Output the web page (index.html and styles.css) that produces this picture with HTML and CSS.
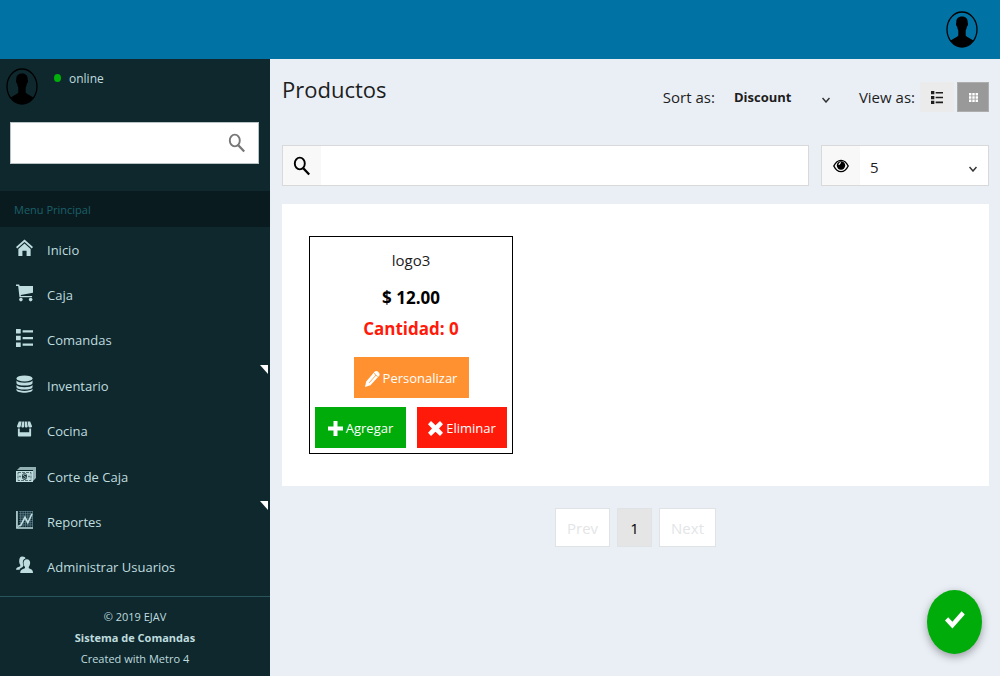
FILE: index.html
```html
<!DOCTYPE html>
<html lang="es">
<head>
<meta charset="utf-8">
<meta name="viewport" content="width=device-width, initial-scale=1">
<title>Productos</title>
<link rel="stylesheet" href="styles.css">
</head>
<body>
<svg class="defs" aria-hidden="true">
  <symbol id="avatar" viewBox="0 0 32 37" preserveAspectRatio="none">
    <ellipse cx="16" cy="18.500" rx="15" ry="17.500" fill="none" stroke="#000" stroke-width="1.300"/>
    <path d="M16 5.500c-4 0-6 2.400-5.700 6.200-.7.600-.2 3.500.8 3.900.2 1.800.8 3 1.200 4v5c-1.200 2-4.400 2.600-7.600 4.800C7.500 33.500 11.800 36 16 36s8.500-2.500 11.300-6.600c-3.200-2.200-6.400-2.800-7.600-4.800v-5c.4-1 1-2.200 1.200-4 1-.4 1.500-3.300.8-3.900C22 7.900 20 5.500 16 5.500z"/>
  </symbol>
  <symbol id="search" viewBox="0 0 18 20">
    <ellipse cx="6.800" cy="7.500" rx="5" ry="5.900" fill="none" stroke="currentColor" stroke-width="1.900"/>
    <path d="M10.300 12.200l5.900 6.300" fill="none" stroke="currentColor" stroke-width="2.300"/>
  </symbol>
  <symbol id="list" viewBox="0 0 18 20" preserveAspectRatio="none">
    <path d="M0 0h5v5H0zM0 7.500h5v5H0zM0 15h5v5H0zM7 1.500h11v2.500H7zM7 8.800h11v2.500H7zM7 16.200h11v2.500H7z"/>
  </symbol>
</svg>

<header class="topbar">
  <button class="avatar-btn" aria-label="Perfil"><svg class="avatar"><use href="#avatar"/></svg></button>
</header>

<div class="shell">
  <aside class="sidebar">
    <div class="user">
      <svg class="avatar"><use href="#avatar"/></svg>
      <a class="status" href="#"><span class="dot"></span>online</a>
    </div>
    <form class="side-search">
      <input type="text" aria-label="Buscar en el menú">
      <button type="button" aria-label="Buscar"><svg class="icon-search"><use href="#search"/></svg></button>
    </form>
    <h2 class="menu-title">Menu Principal</h2>
    <nav class="menu">
      <a href="#"><svg viewBox="0 0 18 18"><path d="M9 0l9 8-1.300 1.500L9 2.700 1.300 9.500 0 8z"/><path d="M2.500 10L9 4.200l6.500 5.800v7.500h-4.300V12H6.800v5.500H2.500z"/></svg>Inicio</a>
      <a href="#"><svg viewBox="0 0 18 18"><path d="M0 0h3.400l.5 1.500H18v7.300L5 11l.2 1.200H17v1.300H3.700L2.300 1.500H0z"/><circle cx="5.200" cy="16" r="1.900"/><circle cx="15.500" cy="16" r="1.900"/></svg>Caja</a>
      <a href="#"><svg><use href="#list"/></svg>Comandas</a>
      <a href="#" class="has-sub"><svg viewBox="0 0 18 20" preserveAspectRatio="none"><ellipse cx="9" cy="3.800" rx="8.500" ry="3.300"/><path d="M.5 6.200c2 3.300 15 3.300 17 0v2.600c-.5 4-16.500 4-17 0zM.5 11c2 3.300 15 3.300 17 0v2.200c-.5 4-16.500 4-17 0zM.5 15.400c2 3.200 15 3.200 17 0v1.300c-.5 4-16.500 4-17 0z"/></svg>Inventario</a>
      <a href="#"><svg viewBox="0 0 18 18"><path d="M3 1h3L5 6c0 2-4 2-4 0zM6.700 1h2v5c0 2-3.200 2-3 0zM9.400 1h2l1 5c0 2-3 2-3 0zM12.200 1H15l2 5c0 2-4 2-4 0zM2 8.500h2v4h10v-4h2V16c0 .7-.3 1-1 1H3c-.7 0-1-.3-1-1z"/></svg>Cocina</a>
      <a href="#"><svg class="wide" viewBox="0 0 20 16"><path d="M3 1l1-1h16v11l-3 3V3H1z" opacity=".75"/><path d="M0 4h17v11H0z"/><path d="M2 5.500h13v8H2z" fill="none" stroke="#10282e" stroke-width=".6" stroke-dasharray="3 1"/><ellipse cx="8.500" cy="9.500" rx="2.400" ry="3.300" fill="#10282e"/><path d="M10 7.800c-1-1-2.700-.7-2.700.4 0 1.400 2.500.9 2.500 2.200 0 1.200-1.900 1.300-2.800.4" fill="none" stroke="#bfdcdf" stroke-width=".8"/><path d="M3.500 8.800h1v1.500h-1zM12.500 8.800h1v1.500h-1z" fill="#10282e"/></svg>Corte de Caja</a>
      <a href="#" class="has-sub"><svg viewBox="0 0 18 20" preserveAspectRatio="none"><path d="M3 .5h15M3 3h15M3 5.500h15M3 8h15M3 10.500h15M3 13h15M3 15.500h15M5 0v18M7.500 0v18M10 0v18M12.500 0v18M15 0v18M17.500 0v18" stroke="#668f9c" stroke-width=".7"/><path d="M1 0v19h17" fill="none" stroke="#bfdcdf" stroke-width="1.700"/><path d="M2 17l3-1 4.500-9 3 6L17 3" fill="none" stroke="#bfdcdf" stroke-width="1.700"/></svg>Reportes</a>
      <a href="#"><svg viewBox="0 0 18 18"><path d="M6.500 0C9 0 10 1 10 2 7 3 6.700 6 8 9.500L7 11l-3 2v1H0c0-2.500 2-2.800 4.500-3.800V8.700C3 7.500 2.500 0 6.500 0z"/><path d="M11.500 3c4.500 0 4 6 2 8v1.500c2.500 1 4.500 1.500 4.500 5H4.500c0-3.500 2.300-4 5-5V11c-2-2-2.500-8 2-8z"/></svg>Administrar Usuarios</a>
    </nav>
    <footer class="side-foot">
      <p>© 2019 EJAV</p>
      <p><b>Sistema de Comandas</b></p>
      <p>Created with Metro 4</p>
    </footer>
  </aside>

  <main class="content">
    <div class="heading">
      <h1>Productos</h1>
      <div class="tools">
        <label for="sort">Sort as:</label>
        <span class="select sort"><select id="sort"><option>Discount</option></select><svg class="chev" viewBox="0 0 8 6"><path d="M.5 1L4 5l3.500-4"/></svg></span>
        <span class="view-label">View as:</span>
        <button class="view" aria-label="Lista"><svg class="view-list"><use href="#list"/></svg></button>
        <button class="view active" aria-label="Cuadrícula"><svg class="view-grid" viewBox="0 0 9 9"><path d="M0 0h2.400v2.400H0zM3.300 0h2.400v2.400H3.300zM6.600 0H9v2.400H6.600zM0 3.300h2.400v2.400H0zM3.300 3.300h2.400v2.400H3.300zM6.600 3.300H9v2.400H6.600zM0 6.600h2.400V9H0zM3.300 6.600h2.400V9H3.300zM6.600 6.600H9V9H6.600z"/></svg></button>
      </div>
    </div>

    <div class="filters">
      <div class="field grow">
        <label class="prefix" for="q" aria-label="Buscar producto"><svg class="icon-search"><use href="#search"/></svg></label>
        <input id="q" type="text">
      </div>
      <div class="field count">
        <label class="prefix" for="count" aria-label="Productos por página"><svg class="eye" viewBox="0 0 16 14"><path d="M.8 7C4.500-.5 11.500-.5 15.200 7 11.500 14.500 4.500 14.500.8 7z" fill="none" stroke="currentColor" stroke-width="1.400"/><circle cx="8" cy="6.500" r="4.200"/><path d="M6 6c0-1.400.8-2.200 2-2.400" fill="none" stroke="#f8f8f8" stroke-width="1.200"/></svg></label>
        <span class="select"><select id="count"><option>5</option></select><svg class="chev" viewBox="0 0 8 6"><path d="M.5 1L4 5l3.500-4"/></svg></span>
      </div>
    </div>

    <section class="panel">
      <article class="card">
        <h3>logo3</h3>
        <p class="price">$ 12.00</p>
        <p class="qty">Cantidad: 0</p>
        <button class="btn orange"><svg viewBox="0 0 15 17"><path d="M0 17l1.200-5.500L9.800 1.600c1.500-2 6 1.600 4.600 3.800L5.500 15.200z"/><path d="M4.200 12.800L11 5M9 3.200L12.700 6.800" fill="none" stroke="#ff9130" stroke-width=".8"/></svg>Personalizar</button>
        <div class="actions">
          <button class="btn green"><svg viewBox="0 0 15 17"><path d="M5.500 1h4v5.500H15v4H9.500V16h-4v-5.500H0v-4h5.500z"/></svg>Agregar</button>
          <button class="btn red"><svg viewBox="0 0 15 17"><path d="M3 1l4.500 4.300L12 1l3 3.300-4 4.200 4 4.200-3 3.300-4.500-4.300L3 16l-3-3.300 4-4.200-4-4.200z"/></svg>Eliminar</button>
        </div>
      </article>
    </section>

    <nav class="pager" aria-label="Paginación">
      <button disabled>Prev</button>
      <button class="current">1</button>
      <button disabled>Next</button>
    </nav>
  </main>
</div>

<button class="fab" aria-label="Confirmar"><svg viewBox="0 0 20 18"><path d="M0 9.500l3.200-3.300 4.200 4.600L16.600.300 19.800 3.500 7.400 17.500z"/></svg></button>
</body>
</html>
```
FILE: styles.css
```css
* { box-sizing: border-box; }
body {
  margin: 0;
  min-height: 100vh;
  display: flex;
  flex-direction: column;
  font-family: "Open Sans", "Noto Sans", sans-serif;
  font-size: 14px;
  color: #1d1d1d;
  background: #eaeff6;
}
h1, h2, h3, p { margin: 0; font-weight: 400; }
a { color: inherit; text-decoration: none; }
button, input, select { font: inherit; color: inherit; border: 0; padding: 0; margin: 0; }
button { cursor: pointer; }
svg { display: block; fill: currentColor; flex: none; }
.defs { position: absolute; width: 0; height: 0; }

.topbar {
  height: 59px;
  padding-right: 22px;
  display: flex;
  align-items: center;
  justify-content: flex-end;
  background: #0072a3;
}
.avatar-btn { background: none; }
.avatar { width: 32px; height: 37px; color: #000; }
.shell { flex: 1; display: flex; }

.sidebar {
  width: 270px;
  flex: none;
  display: flex;
  flex-direction: column;
  font-size: 13px;
  color: #bfdcdf;
  background: #0f282e;
}
.user { height: 63px; padding: 9px 6px; display: flex; gap: 16px; }
.status { height: 20px; display: flex; align-items: center; gap: 8px; font-size: 12px; }
.dot { width: 7px; height: 8px; border-radius: 50%; background: #00af0a; }
.side-search {
  height: 42px;
  margin: 0 11px 27px 10px;
  display: flex;
  background: #fff;
  border: 1px solid #b9c3c5;
}
.side-search input { flex: 1; min-width: 0; padding: 0 8px; background: none; color: #1d1d1d; }
.side-search button { width: 42px; display: grid; place-items: center; background: none; color: #777; }
.icon-search { width: 18px; height: 20px; }
.menu-title {
  height: 36px;
  padding-left: 14px;
  display: flex;
  align-items: center;
  font-size: 11px;
  color: #1b6069;
  background: #091b1f;
}
.menu { flex: 1; display: flex; flex-direction: column; padding-bottom: 6px; }
.menu a {
  flex: 1;
  min-height: 44px;
  position: relative;
  display: grid;
  grid-template-columns: 31px 1fr;
  align-items: center;
  padding-left: 16px;
}
.menu svg { width: 17px; height: 18px; margin-bottom: 4px; }
.menu svg.wide { width: 20px; height: 16px; }
.menu .has-sub::after {
  content: "";
  position: absolute;
  top: 2px;
  right: 2px;
  border-top: 9px solid #fff;
  border-left: 8px solid transparent;
}
.side-foot {
  padding: 9px 0 7px;
  border-top: 1px solid #28555c;
  text-align: center;
  font-size: 11px;
  line-height: 21px;
}

.content { flex: 1; min-width: 0; padding: 14px 11px 14px 12px; }
.heading { display: flex; justify-content: space-between; }
h1 { font-size: 22px; font-weight: 500; line-height: 32px; }
.tools { height: 30px; margin: 9px 0 33px; display: flex; align-items: center; font-size: 15px; }
.select { position: relative; display: flex; }
.select select { appearance: none; width: 100%; background: none; cursor: pointer; }
.chev {
  position: absolute;
  right: 11px;
  top: 50%;
  width: 8px;
  height: 6px;
  fill: none;
  stroke: #333;
  stroke-width: 1.500;
  pointer-events: none;
}
.sort { width: 117px; margin: 0 18px 0 9px; font-size: 13px; font-weight: 700; }
.sort select { padding-left: 10px; }
.view { width: 34px; height: 30px; margin-right: 3px; display: grid; place-items: center; background: #ebebeb; }
.view-label { margin-right: 5px; }
.view.active { width: 32px; margin-right: 0; border: 1px solid #adadad; background: #999; color: #fff; }
.view-list { width: 12px; height: 13px; }
.view-grid { width: 9px; height: 9px; }

.filters { display: flex; gap: 12px; }
.field { height: 41px; display: flex; background: #fff; border: 1px solid #d9d9d9; }
.grow { flex: 1; }
.count { width: 168px; }
.prefix { width: 38px; display: grid; place-items: center; background: #f8f8f8; color: #000; }
.field input { flex: 1; min-width: 0; padding: 0 10px; background: none; }
.field .select { flex: 1; font-size: 15px; }
.field select { padding: 2px 10px 0; }
.eye { width: 16px; height: 14px; }

.panel { margin-top: 18px; padding: 32px 27px; background: #fff; }
.card {
  width: 204px;
  border: 1px solid #000;
  padding: 9px 5px 5px;
  display: flex;
  flex-direction: column;
  align-items: center;
}
.card h3 { font-size: 15px; line-height: 28px; }
.price, .qty { font-size: 17px; font-weight: 700; }
.price { line-height: 32px; margin-top: 8px; color: #000; }
.qty { line-height: 30px; color: #ff1a0a; }
.btn { height: 41px; padding-top: 1px; display: flex; align-items: center; justify-content: center; gap: 3px; color: #fff; font-size: 13px; }
.btn svg { width: 15px; height: 17px; }
.orange { width: 115px; margin-top: 13px; background: #ff9130; }
.actions { width: 100%; margin-top: 9px; display: flex; justify-content: space-between; }
.green { width: 91px; background: #00ac0a; }
.red { width: 90px; background: #ff1a0a; }

.pager { margin-top: 22px; display: flex; justify-content: center; gap: 7px; font-size: 15px; }
.pager button { height: 39px; padding: 0 11px; background: #fff; border: 1px solid #e0e3e6; }
.pager button:disabled { color: #e3e5e7; }
.pager .current { width: 35px; background: #e5e5e5; color: #000; }

.fab {
  position: fixed;
  right: 18px;
  bottom: 22px;
  width: 55px;
  height: 64px;
  padding-bottom: 4px;
  display: grid;
  place-items: center;
  border-radius: 50%;
  background: #00ac0a;
  color: #fff;
  box-shadow: 0 3px 8px rgba(0, 0, 0, .35);
}
.fab svg { width: 20px; height: 18px; }
```
